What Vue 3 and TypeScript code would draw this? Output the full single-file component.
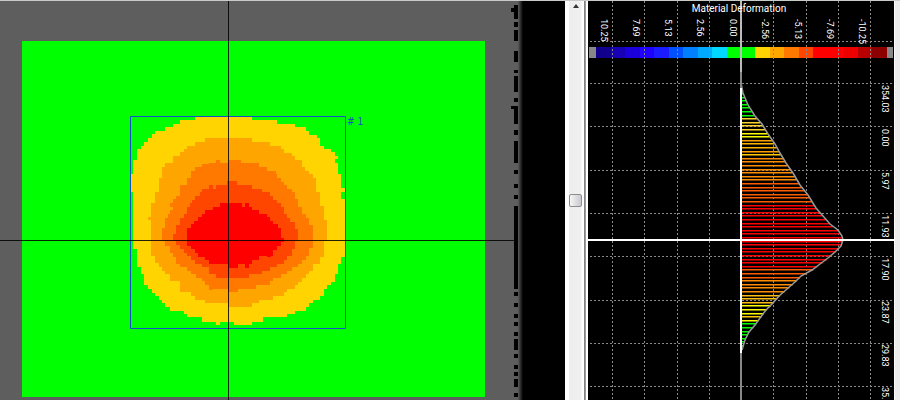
<script setup lang="ts">
import { ref } from 'vue'

type Step = [number, number]

interface Contour {
  color: string
  left: Step[]
  right: Step[]
  bottom: number
}

// Each step is [y, x]: from that y downwards the edge sits at x.
const contours: Contour[] = [
  {
    color: '#ffd400',
    left: [[117, 195], [120, 180], [124, 173], [127, 165], [131, 155], [134, 152], [138, 148], [142, 144], [146, 141], [149, 137], [160, 133], [174, 131], [192, 133], [249, 137], [267, 141], [274, 144], [285, 148], [289, 152], [293, 155], [296, 159], [300, 162], [303, 165], [307, 170], [311, 184], [314, 187], [317, 202], [322, 234]],
    right: [[117, 252], [120, 277], [124, 295], [127, 306], [131, 309], [135, 317], [138, 320], [146, 324], [149, 331], [152, 335], [156, 338], [159, 335], [163, 338], [174, 341], [188, 345], [192, 341], [199, 345], [257, 341], [264, 338], [274, 335], [282, 331], [285, 327], [289, 324], [296, 320], [300, 313], [303, 309], [307, 306], [311, 295], [314, 287], [317, 263], [322, 252]],
    bottom: 325,
  },
  {
    color: '#ffa500',
    left: [[138, 205], [142, 195], [146, 187], [149, 184], [152, 180], [156, 173], [163, 165], [167, 162], [178, 159], [192, 155], [203, 151], [217, 148], [220, 151], [256, 155], [263, 159], [267, 162], [271, 165], [274, 170], [281, 180], [292, 191], [296, 195], [300, 205], [303, 228]],
    right: [[138, 252], [142, 270], [146, 281], [149, 284], [153, 292], [156, 295], [160, 302], [167, 305], [171, 309], [174, 313], [178, 316], [192, 320], [206, 324], [220, 327], [241, 324], [257, 320], [264, 313], [271, 309], [274, 306], [278, 302], [282, 298], [285, 295], [289, 287], [292, 284], [296, 273], [300, 259], [303, 252]],
    bottom: 307,
  },
  {
    color: '#ff7800',
    left: [[160, 229], [163, 209], [164, 202], [167, 195], [171, 191], [178, 187], [185, 180], [192, 180], [196, 176], [199, 173], [203, 170], [207, 173], [210, 170], [214, 168], [218, 165], [228, 162], [241, 165], [246, 170], [253, 173], [257, 176], [264, 180], [267, 187], [271, 191], [274, 196], [278, 202], [281, 205], [285, 209], [289, 228]],
    right: [[160, 241], [163, 259], [167, 267], [171, 276], [174, 277], [178, 281], [182, 284], [185, 287], [189, 292], [192, 295], [199, 298], [207, 302], [214, 306], [218, 309], [225, 313], [248, 309], [256, 306], [260, 302], [264, 298], [267, 292], [271, 287], [274, 281], [278, 273], [281, 270], [285, 256], [289, 238]],
    bottom: 292,
  },
  {
    color: '#ff4600',
    left: [[181, 227], [185, 216], [189, 202], [192, 200], [196, 195], [200, 192], [203, 190], [207, 187], [214, 184], [218, 180], [225, 176], [234, 173], [241, 176], [245, 180], [249, 184], [253, 187], [256, 191], [260, 195], [264, 202], [267, 209], [274, 216]],
    right: [[181, 237], [185, 252], [189, 262], [192, 270], [196, 273], [200, 277], [203, 281], [207, 284], [214, 287], [218, 290], [222, 295], [229, 298], [241, 295], [249, 292], [256, 287], [260, 284], [264, 277], [267, 270], [271, 262], [274, 249]],
    bottom: 278,
  },
  {
    color: '#ff0000',
    left: [[203, 220], [207, 213], [210, 205], [214, 202], [217, 198], [221, 194], [224, 191], [228, 187], [246, 191], [249, 195], [253, 198], [257, 205], [260, 209], [264, 228]],
    right: [[203, 242], [207, 252], [210, 259], [214, 267], [217, 270], [221, 273], [224, 278], [228, 281], [238, 284], [242, 281], [246, 277], [250, 273], [256, 259], [260, 252], [264, 238]],
    bottom: 268,
  },
]

// Single cells that stand out from the contour edges: x, y, color.
const cells: [number, number, string][] = [
  [216, 321, '#ffd400'],
  [216, 160, '#ff7800'],
  [209, 185, '#ff4600'],
  [209, 286, '#ff7800'],
  [267, 253, '#ff0000'],
  [245, 203, '#ff0000'],
  [245, 264, '#ff0000'],
]

function contourPath(c: Contour): string {
  let d = `M${c.right[0][1]} ${c.left[0][0]}`
  for (const [y, x] of c.left) d += `V${y}H${x}`
  d += `V${c.bottom}`
  const down = c.right.slice().reverse()
  for (const [y, x] of down) d += `H${x}V${y}`
  return d + 'Z'
}

// Ruler marks along the right edge of the map: top, bottom.
const marks: [number, number][] = [
  [5, 19], [22, 27], [30, 41], [51, 62], [70, 73], [76, 92], [98, 102], [106, 124],
  [130, 135], [141, 163], [170, 174], [184, 188], [195, 199], [206, 289], [292, 296],
  [303, 307], [314, 318], [322, 326], [332, 336], [339, 350], [354, 358], [365, 369],
  [372, 376], [379, 387], [393, 397],
]

const columns = [612, 644, 677, 709, 773, 806, 838, 870]
const rows = [41, 83, 126, 170, 213, 256, 300, 343, 386]

const scaleStops = [589, 596, 611, 625, 640, 654, 669, 683, 698, 712, 727, 755, 770, 784, 799, 813, 843, 858, 872, 887, 893]
const scaleColors = [
  '#888', '#10008c', '#1800b4', '#1c00dc', '#2000ff', '#1a1cff', '#0050ff', '#0080ff', '#00a8ff', '#00d8ff',
  '#00ff00', '#ffd400', '#ffa500', '#ff7800', '#ff4600', '#ff0000', '#ee0000', '#b80000', '#8c0000', '#888',
]

const valueLabels = [
  { x: 601, text: '10.25' },
  { x: 633, text: '7.69' },
  { x: 665, text: '5.13' },
  { x: 697, text: '2.56' },
  { x: 730, text: '0.00' },
  { x: 762, text: '-2.56' },
  { x: 795, text: '-5.13' },
  { x: 827, text: '-7.69' },
  { x: 859, text: '-10.25' },
]

const positionLabels = [
  { y: 85, text: '354.03' },
  { y: 129, text: '0.00' },
  { y: 172, text: '5.97' },
  { y: 215, text: '11.93' },
  { y: 258, text: '17.90' },
  { y: 301, text: '23.87' },
  { y: 344, text: '29.83' },
  { y: 387, text: '35.' },
]

// Deformation profile: [y, x].
const profile: Step[] = [
  [83, 741], [93, 743], [105, 748], [116, 755], [124, 762], [134, 768], [144, 775], [153, 780], [163, 786],
  [173, 793], [185, 800], [195, 808], [208, 816], [216, 823], [224, 830], [230, 838], [236, 842], [240, 843],
  [246, 841], [252, 835], [258, 828], [264, 820], [270, 812], [276, 801], [282, 795], [289, 787], [296, 779],
  [303, 773], [310, 766], [318, 760], [325, 755], [332, 749], [340, 745], [350, 742],
]
const profilePoints = profile.map(([y, x]) => `${x},${y}`).join(' ')

function profileAt(y: number): number {
  for (let i = 1; i < profile.length; i++) {
    const [y0, x0] = profile[i - 1]
    const [y1, x1] = profile[i]
    if (y <= y1) return x0 + ((x1 - x0) * (y - y0)) / (y1 - y0)
  }
  return 741
}

const bands: [number, string][] = [
  [116, '#00ff00'], [130, '#ffd428'], [139, '#ffff00'], [143, '#ffa000'], [150, '#ffb400'], [152, '#ffa000'],
  [155, '#ffc800'], [180, '#ff8c00'], [203, '#ff5a00'], [267, '#ff0000'], [278, '#ff5a00'], [292, '#ff8c00'],
  [304, '#ffbe10'], [314, '#ffff00'], [317, '#ffc800'], [321, '#ffff00'], [400, '#00ff00'],
]

const bars = Array.from({ length: 71 }, (_, i) => {
  const y = Math.round(93 + i * 3.6)
  const band = bands.find(([limit]) => y < limit)
  return { y, width: profileAt(y) - 741, color: band ? band[1] : '#00ff00' }
})

const position = ref(48)
</script>

<template>
  <main class="viewer">
    <svg class="map" viewBox="0 0 565 400" role="img" aria-label="Deformation map">
      <defs>
        <linearGradient id="edge">
          <stop offset="0" stop-color="#5c5c5c" />
          <stop offset="1" stop-color="#000" />
        </linearGradient>
      </defs>
      <rect width="565" height="400" fill="#000" />
      <rect width="518" height="400" fill="#5e5e5e" />
      <rect x="518" width="5" height="400" fill="url(#edge)" />
      <rect x="22" y="41" width="463" height="356" fill="#00ff00" />
      <g shape-rendering="crispEdges">
        <path v-for="c in contours" :key="c.color" :d="contourPath(c)" :fill="c.color" />
        <rect v-for="([x, y, color], i) in cells" :key="i" :x="x" :y="y" width="4" height="4" :fill="color" />
      </g>
      <path d="M130.500 116.500H345.500V328.500H130.500Z" class="selection" />
      <text x="347" y="125" class="tag"># 1</text>
      <path d="M228.500 0V400M0 240.500H515" class="cross" />
      <rect v-for="[top, bottom] in marks" :key="top" x="514" :y="top" width="4" :height="bottom - top" />
      <path d="M511 8h4v4h-4zM511 106h4v3h-4z" />
      <rect width="565" height="1" fill="#c8ccc8" />
    </svg>

    <div class="scroller">
      <button type="button" class="up" aria-label="Scroll up" @click="position = Math.max(0, position - 1)">
        <svg viewBox="0 0 6 4"><path d="M0 4L3 0L6 4Z" fill="#333" /></svg>
      </button>
      <input v-model.number="position" class="track" type="range" min="0" max="100" aria-label="Scroll position" />
    </div>

    <svg class="chart" viewBox="588 0 312 400" role="img" aria-label="Material Deformation profile">
      <rect x="588" width="312" height="400" fill="#ececec" />
      <rect x="588" width="307" height="400" fill="#fff" />
      <rect x="588" width="306" height="400" fill="#000" />
      <rect
        v-for="(color, i) in scaleColors" :key="i" :x="scaleStops[i]" y="47"
        :width="scaleStops[i + 1] - scaleStops[i]" height="11" :fill="color" shape-rendering="crispEdges"
      />
      <g class="grid">
        <path v-for="x in columns" :key="x" :d="`M${x + 0.5} 1V400`" />
        <path v-for="y in rows" :key="y" :d="`M590 ${y + 0.5}H894`" />
      </g>
      <rect v-for="b in bars" :key="b.y" x="741" :y="b.y" :width="b.width" height="1.5" :fill="b.color" />
      <polyline :points="profilePoints" class="profile" />
      <rect x="740" width="2" height="72" fill="#bbb" />
      <rect x="740" y="72" width="2" height="328" fill="#888" />
      <rect x="740" y="88" width="2" height="265" fill="#fff" />
      <rect x="588" y="239" width="306" height="2" fill="#fff" />
      <text x="739" y="12" class="title">Material Deformation</text>
      <g class="labels">
        <text v-for="l in valueLabels" :key="l.text" :transform="`translate(${l.x} 19) rotate(90)`">{{ l.text }}</text>
        <text v-for="l in positionLabels" :key="l.text" :transform="`translate(882 ${l.y}) rotate(90)`">{{ l.text }}</text>
      </g>
      <rect x="588" width="312" height="1" fill="#c8ccc8" />
    </svg>
  </main>
</template>

<style>
body {
  margin: 0;
  background: #000;
}
</style>

<style scoped>
.viewer {
  display: grid;
  grid-template-columns: 565fr 23px 312fr;
  overflow: hidden;
}

.map,
.chart {
  display: block;
  width: 100%;
}

.selection {
  fill: none;
  stroke: #1450c8;
}

.tag {
  fill: #1450c8;
  font: 10px "DejaVu Sans Condensed", "DejaVu Sans", sans-serif;
}

.cross {
  stroke: #000;
  stroke-opacity: 0.85;
}

.scroller {
  box-sizing: border-box;
  display: flex;
  flex-direction: column;
  border-top: 1px solid #c8ccc8;
  background: linear-gradient(to right, #fff 4px, #ededed 4px, #f0f0f0 16px, #fff 17px, #fff 19px, #777 19px, #aaa 21px, #fff 21px);
}

.up {
  display: flex;
  justify-content: center;
  width: 14px;
  height: 14px;
  margin-left: 4px;
  padding: 3px 0 0;
  border: 0;
  background: none;
}

.up svg {
  width: 6px;
  height: 4px;
}

.track {
  flex: 1;
  width: 13px;
  min-height: 0;
  margin: 0 0 0 4px;
  appearance: none;
  background: none;
  writing-mode: vertical-lr;
}

.track::-webkit-slider-thumb {
  box-sizing: border-box;
  width: 13px;
  height: 13px;
  appearance: none;
  border: 1px solid #8c8c8c;
  border-radius: 2px;
  background: linear-gradient(to right, #f6f6f6, #c8c8d0);
}

.grid path {
  fill: none;
  stroke: #8a8a8a;
  stroke-dasharray: 2 2;
}

.profile {
  fill: none;
  stroke: #999;
  stroke-width: 1.5;
}

.title {
  fill: #fff;
  font: 10px Roboto, sans-serif;
  text-anchor: middle;
}

.labels text {
  fill: #fff;
  font: 9px Roboto, sans-serif;
}
</style>
